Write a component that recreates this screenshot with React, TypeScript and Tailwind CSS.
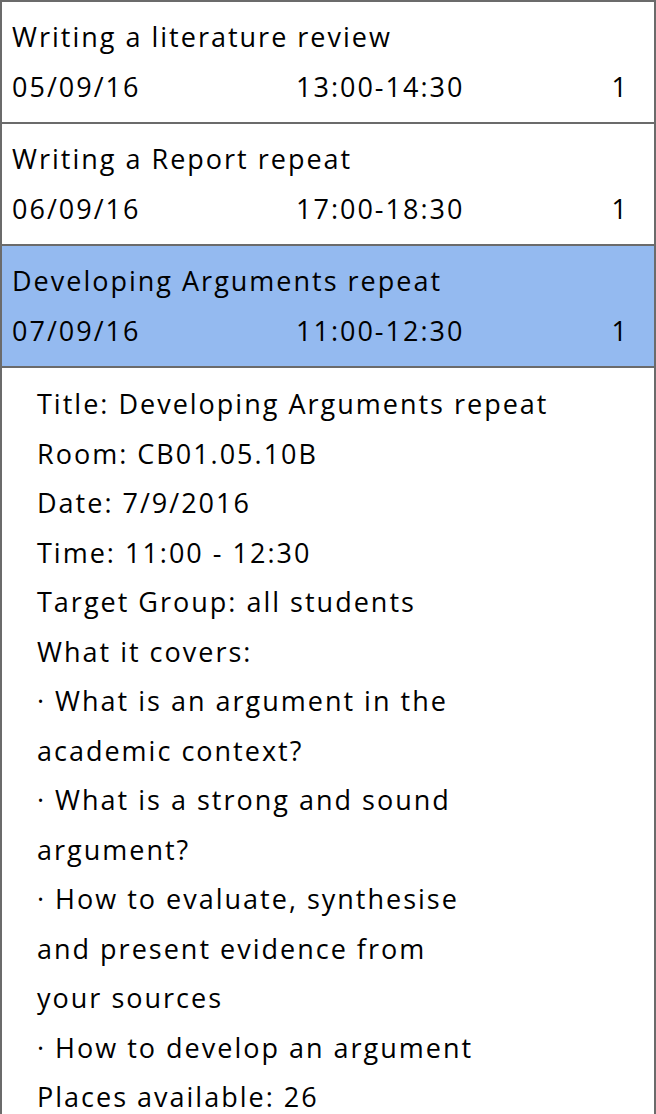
const sessions = [
  { id: 1, title: 'Writing a literature review', date: '05/09/16', time: '13:00-14:30', count: '1' },
  { id: 2, title: 'Writing a Report repeat', date: '06/09/16', time: '17:00-18:30', count: '1' },
  { id: 3, title: 'Developing Arguments repeat', date: '07/09/16', time: '11:00-12:30', count: '1', selected: true },
]

const details = [
  'Title: Developing Arguments repeat',
  'Room: CB01.05.10B',
  'Date: 7/9/2016',
  'Time: 11:00 - 12:30',
  'Target Group: all students',
  'What it covers:',
  '· What is an argument in the',
  'academic context?',
  '· What is a strong and sound',
  'argument?',
  '· How to evaluate, synthesise',
  'and present evidence from',
  'your sources',
  '· How to develop an argument',
  'Places available: 26',
]

export default function App() {
  return (
    <div
      className="w-[656px] h-[1114px] overflow-hidden bg-white border-2 border-b-0 border-[#6b6b6b] text-black text-[27px] leading-[49.5px] tracking-[2px] whitespace-nowrap"
      style={{ fontFamily: '"Open Sans", Lato, sans-serif' }}
    >
      {sessions.map((s) => (
        <div
          key={s.id}
          className={`pl-[10px] pr-[25px] pt-[10px] pb-[11px] border-b-2 border-[#6b6b6b] ${
            s.selected ? 'bg-[#94baf0]' : 'bg-white'
          }`}
        >
          <div>{s.title}</div>
          <div className="flex">
            <span className="w-[284px]">{s.date}</span>
            <span className="flex-1">{s.time}</span>
            <span>{s.count}</span>
          </div>
        </div>
      ))}

      <div className="pl-[35px] pt-[11px]">
        {details.map((line, i) => (
          <div key={i}>{line}</div>
        ))}
      </div>
    </div>
  )
}
